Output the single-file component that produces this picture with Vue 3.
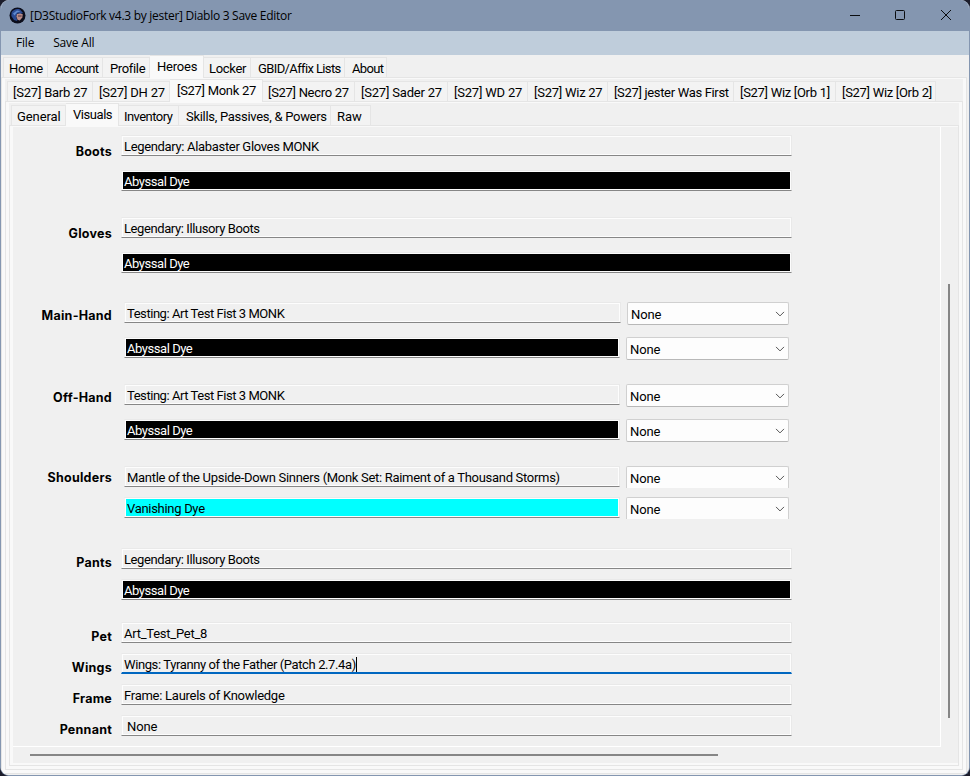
<script setup>
const mainTabs = [
  { name: 'Home', w: 45, track: -0.25 },
  { name: 'Account', w: 55, track: -0.7, shift: true },
  { name: 'Profile', w: 47, track: -0.35, shift: true },
  { name: 'Heroes', w: 54, active: true, track: -0.2, shift: true },
  { name: 'Locker', w: 47, track: -0.3, pull: true },
  { name: 'GBID/Affix Lists', w: 94, track: -0.62, shift: true },
  { name: 'About', w: 42, track: -0.65, shift: true },
]
const heroTabs = [
  { name: '[S27] Barb 27', w: 86, track: -0.22 },
  { name: '[S27] DH 27', w: 77, track: -0.2 },
  { name: '[S27] Monk 27', w: 93, active: true, track: -0.3, shift: true },
  { name: '[S27] Necro 27', w: 92, track: -0.3, pull: true },
  { name: '[S27] Sader 27', w: 93, track: -0.2 },
  { name: '[S27] WD 27', w: 80, track: -0.2 },
  { name: '[S27] Wiz 27', w: 80, track: -0.25 },
  { name: '[S27] jester Was First', w: 126, track: -0.33 },
  { name: '[S27] Wiz [Orb 1]', w: 102, track: -0.3 },
  { name: '[S27] Wiz [Orb 2]', w: 100, track: -0.3 },
]
const pageTabs = [
  { name: 'General', w: 55, track: -0.1 },
  { name: 'Visuals', w: 53, active: true, track: -0.45, shift: true },
  { name: 'Inventory', w: 60, track: -0.55, pull: true },
  { name: 'Skills, Passives, & Powers', w: 152, track: -0.29, shift: true },
  { name: 'Raw', w: 40, track: 0 },
]
const abyssal = { text: 'Abyssal Dye', dye: 'abyssal', track: -0.45 }
const slots = [
  { label: 'Boots', kind: 'armor', rows: [{ text: 'Legendary: Alabaster Gloves MONK', track: -0.33 }, abyssal] },
  { label: 'Gloves', kind: 'armor last', rows: [{ text: 'Legendary: Illusory Boots', track: -0.4 }, abyssal] },
  { label: 'Main-Hand', kind: 'weapon', rows: [{ text: 'Testing: Art Test Fist 3 MONK', combo: 'None', wide: true, track: -0.45 }, { ...abyssal, combo: 'None' }] },
  { label: 'Off-Hand', kind: 'weapon', rows: [{ text: 'Testing: Art Test Fist 3 MONK', combo: 'None', track: -0.45 }, { ...abyssal, combo: 'None' }] },
  { label: 'Shoulders', kind: 'weapon compact', rows: [{ text: 'Mantle of the Upside-Down Sinners (Monk Set: Raiment of a Thousand Storms)', combo: 'None', track: -0.3 }, { text: 'Vanishing Dye', dye: 'vanishing', combo: 'None', track: -0.3 }] },
  { label: 'Pants', kind: 'pants compact', rows: [{ text: 'Legendary: Illusory Boots', track: -0.4 }, abyssal] },
  { label: 'Pet', kind: 'single compact', rows: [{ text: 'Art_Test_Pet_8', track: -0.25 }] },
  { label: 'Wings', kind: 'single compact', rows: [{ text: 'Wings: Tyranny of the Father (Patch 2.7.4a)', focus: true, track: -0.39 }] },
  { label: 'Frame', kind: 'single compact', rows: [{ text: 'Frame: Laurels of Knowledge', track: -0.26 }] },
  { label: 'Pennant', kind: 'single compact', rows: [{ text: 'None', inset: true, track: -0.1 }] },
]
const tracking = (item) => ({ letterSpacing: item.track + 'px' })
</script>

<template>
  <div class="desktop">
    <div class="window">
      <header class="titlebar">
        <svg class="logo" width="17" height="17" viewBox="0 0 17 17">
          <circle cx="8.5" cy="8.5" r="8" fill="#0b0d1b" />
          <path d="M2.6 5.5C4.2 2.3 8 1.3 11 2.4L14 6 11.5 7 8.5 6.2 7.2 9 8.3 14 5 13 2.3 9Z" fill="#2b4a92" />
          <path d="M4 6.5 8 3.5 11.5 4.2 8 5.5 5.5 8.5Z" fill="#5f8ad0" />
          <path d="M8 7 11 6.5 13.8 7.2 13.3 10.5 10.8 13.6 8.5 12.8 7.4 9.5Z" fill="#ba8c88" />
          <path d="M9 8.6h3.6v1H9z" fill="#4a3445" />
        </svg>
        <span class="title">[D3StudioFork v4.3 by jester] Diablo 3 Save Editor</span>
        <div class="controls">
          <svg width="104" height="12" viewBox="0 0 104 12" fill="none" stroke="#0b0d10">
            <path d="M0 6.5h10" />
            <rect x="45.5" y="1.5" width="9" height="9" rx="1" />
            <path d="M91 1l10 10M101 1L91 11" />
          </svg>
        </div>
      </header>
      <nav class="menubar"><span class="file">File</span><span>Save All</span></nav>

      <section class="tabs">
        <div class="strip">
          <div v-for="t in mainTabs" :key="t.name" class="tab" :class="{ active: t.active, shift: t.shift, pull: t.pull }" :style="{ width: t.w + 'px' }"><span :style="tracking(t)">{{ t.name }}</span></div>
        </div>
        <div class="pane">
          <section class="tabs">
            <div class="strip">
              <div v-for="t in heroTabs" :key="t.name" class="tab" :class="{ active: t.active, shift: t.shift, pull: t.pull }" :style="{ width: t.w + 'px' }"><span :style="tracking(t)">{{ t.name }}</span></div>
            </div>
            <div class="pane">
              <section class="tabs">
                <div class="strip">
                  <div v-for="t in pageTabs" :key="t.name" class="tab" :class="{ active: t.active, shift: t.shift, pull: t.pull }" :style="{ width: t.w + 'px' }"><span :style="tracking(t)">{{ t.name }}</span></div>
                </div>
                <div class="pane page">
                  <div class="scroller">
                    <div class="form">
                      <div v-for="s in slots" :key="s.label" class="slot" :class="s.kind">
                        <div class="label">{{ s.label }}</div>
                        <div class="fields">
                          <div v-for="(r, i) in s.rows" :key="i" class="row">
                            <div class="field" :class="[r.dye, { focus: r.focus, inset: r.inset, wide: r.wide }]">
                              <div class="inner"><span :style="tracking(r)">{{ r.text }}</span><i v-if="r.focus" class="caret"></i></div>
                            </div>
                            <div v-if="r.combo" class="combo">
                              <span>{{ r.combo }}</span>
                              <svg width="10" height="6" viewBox="0 0 10 6" fill="none" stroke="#555"><path d="M1 .9 5 4.9 9 .9" /></svg>
                            </div>
                          </div>
                        </div>
                      </div>
                    </div>
                    <div class="vbar"><i></i></div>
                    <div class="hbar"><i></i></div>
                  </div>
                </div>
              </section>
            </div>
          </section>
        </div>
      </section>
    </div>
  </div>
</template>

<style>
body { margin: 0; overflow: hidden; }
</style>

<style scoped>
* { box-sizing: border-box; }
.desktop { width: 970px; height: 776px; background: #1c1d2b; }
.window {
  width: 970px; height: 776px; display: flex; flex-direction: column;
  border: solid #8496b0; border-width: 0 1px 1px; border-radius: 9px;
  background: #f0f0f0; overflow: hidden;
  font: 13px/16px Roboto, "Liberation Sans", sans-serif; color: #000; white-space: nowrap;
}
.titlebar { height: 31px; flex: none; background: #8496b0; display: flex; align-items: center; padding-left: 8px; }
.logo { flex: none; margin-bottom: 1px; }
.title { margin-left: 4px; font: 12px/16px "Open Sans", sans-serif; letter-spacing: -.28px; }
.controls { margin-left: auto; width: 119px; height: 12px; margin-bottom: 2px; }
.controls svg { display: block; }
.menubar { height: 24px; flex: none; background: #bfcddb; display: flex; gap: 19px; align-items: center; padding-left: 15px; font: 12px/16px "Open Sans", sans-serif; letter-spacing: -.2px; }

.tabs { flex: 1; min-height: 0; display: flex; flex-direction: column; background: #f0f0f0; }
.strip { height: 22px; flex: none; display: flex; padding-left: 2px; }
.tab { flex: none; height: 20px; margin-top: 2px; padding: 3px 0 0 6px; background: #f3f3f3; border: solid #e5e5e5; border-width: 1px 1px 0 0; }
.tab:first-child { border-left-width: 1px; padding-left: 5px; }
.tab.shift { padding-left: 7px; }
.tab.pull { padding-left: 5px; }
.tab.active { height: 23px; margin-top: 0; background: #f9f9f9; z-index: 1; }
.pane { flex: 1; min-height: 0; display: flex; border: 1px solid #e5e5e5; background: #f9f9f9; padding: 1px 3px 3px; }
.window > .tabs { padding: 0 2px 1px 0; }
.page { padding: 1px 0 2px 3px; }

.scroller { flex: 1; display: grid; grid-template: 620px 16px / 928px 1fr; background: #f0f0f0; }
.form { border: solid #fff; border-width: 0 1px 1px 0; padding-top: 8px; overflow: hidden; }
.slot { display: flex; height: 82px; }
.slot.last { height: 85px; }
.slot.pants { height: 74px; }
.slot.single { height: 31px; }
.label { width: 99px; text-align: right; padding: 8px 0 0 0; font: bold 12.5px/17px Inter, sans-serif; letter-spacing: .25px; }
.weapon .label { padding-top: 5px; }
.weapon.compact .label { padding-top: 3px; }
.pants .label, .single .label { padding-top: 6px; }
.fields { width: 671px; margin-left: 9px; display: flex; flex-direction: column; }
.weapon .fields { margin-left: 12px; width: 665px; }
.row { height: 35px; flex: none; display: flex; align-items: flex-start; }
.compact .row { height: 31px; }
.field { width: 671px; height: 21px; border: 1px solid #e9e9e9; border-left-color: #f0f0f0; border-bottom-color: #868686; }
.inner { height: 19px; border: 1px solid #fdfdfd; padding: 2px 0 0 1px; line-height: 16px; display: flex; }
.weapon .field { width: 496px; }
.weapon .field.wide { width: 497px; }
.inset .inner { padding-left: 4px; }
.abyssal .inner { background: #000; color: #fff; }
.vanishing .inner { background: #0ff; }
.field.focus { border-bottom: 2px solid #0067c0; }
.focus .inner { border-bottom: 0; height: 18px; }
.caret { width: 1px; height: 15px; background: #000; }
.combo {
  margin-left: auto; width: 163px; height: 23px; padding: 0 3px;
  display: flex; justify-content: space-between; align-items: center;
  background: #fdfdfd; border: 1px solid #d0d0d0; border-bottom-color: #b8b8b8; border-radius: 2px;
}
.wide + .combo { width: 162px; }
.combo span { padding-top: 3px; letter-spacing: -.1px; }
.compact .combo { height: 22px; border-bottom: 0; border-radius: 2px 2px 0 0; }
.vbar { padding: 157px 0 0 7px; }
.vbar i { display: block; width: 2px; height: 434px; background: #868686; }
.hbar { padding: 7px 0 0 17px; }
.hbar i { display: block; width: 688px; height: 2px; background: #868686; }
</style>
